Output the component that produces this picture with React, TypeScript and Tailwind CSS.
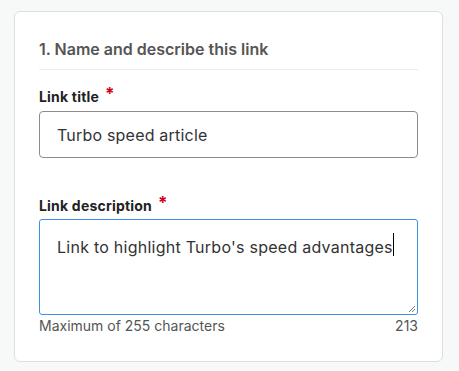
import React from "react";

function Required() {
  return <span className="ml-[6px] text-[17px] leading-none text-[#d0021b] relative top-[-3px]">*</span>;
}

export default function App() {
  return (
    <div
      className="min-h-[371px] w-[459px] bg-[#f7f9f9] pt-[11px] pl-[14px]"
      style={{ fontFamily: "Inter, 'Noto Sans', sans-serif" }}
    >
      <div className="w-[429px] h-[351px] rounded-[6px] border border-[#dcdedf] bg-white px-6 pt-[27px]">
        <h2 className="text-[16px] leading-[20px] font-semibold text-[#555]">1. Name and describe this link</h2>
        <div className="mt-[10px] h-px bg-[#ededed]" />

        <label className="mt-[17px] flex items-center text-[14px] leading-[20px] font-bold tracking-[0.2px] text-[#222]">
          Link title
          <Required />
        </label>
        <div className="mt-[4px] flex h-[47px] items-center rounded-[4px] border border-[#8c8c8c] px-[17px] text-[16px] tracking-[0.2px] text-[#333]">
          Turbo speed article
        </div>

        <label className="mt-[38px] flex items-center text-[14px] leading-[20px] font-bold tracking-[0.2px] text-[#222]">
          Link description
          <Required />
        </label>
        <div className="relative mt-[3px] h-[96px] rounded-[3px] border border-[#3d90e6] px-[17px] pt-[15px] text-[16px] leading-[24px] tracking-[0.25px] text-[#333]">
          <span>Link to highlight Turbo's speed advantages</span>
          <span className="relative top-[-2px] inline-block h-[23px] w-px bg-black align-top" />
          <svg className="absolute bottom-[1px] right-[1px]" width="9" height="9" viewBox="0 0 9 9">
            <path d="M8 2 L2 8 M8 5 L5 8" stroke="#777" strokeWidth="1" />
          </svg>
        </div>
        <div className="mt-[2px] flex justify-between text-[14px] leading-[18px] text-[#555]">
          <span>Maximum of 255 characters</span>
          <span>213</span>
        </div>
      </div>
    </div>
  );
}
